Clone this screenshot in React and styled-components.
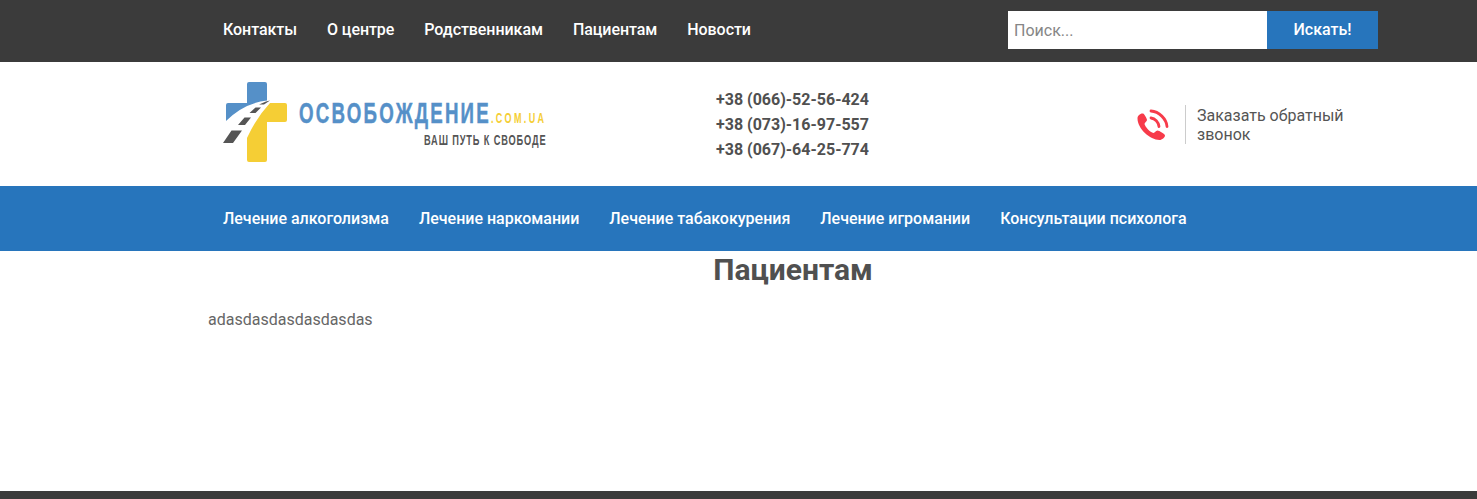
import React from "react";
import styled, { createGlobalStyle } from "styled-components";

const GlobalStyle = createGlobalStyle`
  html, body {
    margin: 0;
    padding: 0;
    background: #fff;
    font-family: Roboto, "Liberation Sans", sans-serif;
    color: #505050;
    overflow: hidden;
  }
  * { box-sizing: border-box; }
`;

const Page = styled.div`
  display: flex;
  flex-direction: column;
  height: 499px;
`;

const Band = styled.div`
  background: ${(p) => p.$bg};
  height: ${(p) => p.$h}px;
  padding-left: 208px;
  flex: none;
`;

const Container = styled.div`
  width: 1170px;
  height: 100%;
  padding-bottom: ${(p) => p.$pb || 0}px;
  display: flex;
  align-items: center;
  justify-content: space-between;
`;

const Nav = styled.nav`
  display: flex;
  gap: 30px;
  padding-left: 15px;
  letter-spacing: ${(p) => p.$ls || 0}px;
`;

const NavLink = styled.a`
  color: #fff;
  font-size: 16px;
  font-weight: 500;
  line-height: 20px;
  text-decoration: none;
  white-space: nowrap;
`;

const Search = styled.form`
  display: flex;
  height: 38px;
  margin: 0;
`;

const SearchInput = styled.input`
  width: 259px;
  border: 0;
  outline: 0;
  padding: 0 6px;
  font: 400 16px Roboto, sans-serif;
  color: #505050;
  background: #fff;
  &::placeholder {
    color: #868686;
    opacity: 1;
  }
`;

const SearchButton = styled.button`
  width: 111px;
  padding: 0 0 2px;
  border: 0;
  background: #2775bc;
  color: #fff;
  font: 500 16px Roboto, sans-serif;
`;

const Logo = styled.a`
  display: flex;
  flex: none;
  width: 330px;
  height: 85px;
  margin: -3px 0 0 12px;
  align-items: center;
`;

const LogoMark = styled.svg`
  width: 70px;
  height: 85px;
  flex: none;
`;

/* no condensed family is installed, so the wordmark is squeezed from its right edge */
const LogoWords = styled.div`
  display: flex;
  flex-direction: column;
  align-items: flex-end;
  width: 256px;
  margin-top: 1px;
  font-family: "Liberation Sans", sans-serif;
  font-weight: 700;
  white-space: nowrap;
`;

const LogoTitle = styled.div`
  display: flex;
  align-items: baseline;
  line-height: 26px;
  transform: scaleX(0.645);
  transform-origin: right center;
`;

const LogoName = styled.span`
  color: #5590c8;
  font-size: 29px;
  letter-spacing: 3.4px;
  -webkit-text-stroke: 0.5px #5590c8;
`;

const LogoDomain = styled.span`
  color: #f5ce35;
  font-size: 14px;
  letter-spacing: 3.6px;
`;

const LogoSlogan = styled.div`
  color: #555;
  font-size: 14px;
  letter-spacing: 1.3px;
  line-height: 14px;
  margin-top: 2px;
  transform: scaleX(0.66);
  transform-origin: right center;
`;

const Phones = styled.div`
  display: flex;
  flex-direction: column;
  margin-left: 166px;
`;

const Phone = styled.a`
  color: #505050;
  font-size: 16px;
  font-weight: 700;
  line-height: 25px;
  white-space: nowrap;
`;

const Callback = styled.div`
  display: flex;
  align-items: center;
  margin-left: auto;
  margin-right: 34px;
  width: 207px;
`;

const CallIcon = styled.svg`
  width: 32px;
  height: 32px;
  flex: none;
  color: #f73b4a;
`;

const CallText = styled.div`
  margin-left: 16px;
  padding: 1px 0 0 11px;
  border-left: 1px solid #ccc;
  font-size: 16px;
  line-height: 19px;
  color: #555;
`;

const Main = styled.main`
  flex: 1;
  padding-left: 208px;
`;

const Content = styled.div`
  width: 1170px;
`;

const Title = styled.h1`
  margin: 0;
  text-align: center;
  font-size: 30px;
  font-weight: 700;
  line-height: 38px;
  color: #505050;
`;

const Paragraph = styled.p`
  margin: 21px 0 0;
  font-size: 16px;
  line-height: 20px;
  color: #666;
`;

const topLinks = ["Контакты", "О центре", "Родственникам", "Пациентам", "Новости"];
const mainLinks = [
  "Лечение алкоголизма",
  "Лечение наркомании",
  "Лечение табакокурения",
  "Лечение игромании",
  "Консультации психолога",
];
const phones = ["+38 (066)-52-56-424", "+38 (073)-16-97-557", "+38 (067)-64-25-774"];

const App = () => {
  return (
    <Page>
      <GlobalStyle />
      <Band $bg="#3b3b3b" $h={62}>
        <Container $pb={2}>
          <Nav $ls={-0.06}>
            {topLinks.map((t) => (
              <NavLink key={t}>{t}</NavLink>
            ))}
          </Nav>
          <Search onSubmit={(e) => e.preventDefault()}>
            <SearchInput placeholder="Поиск..." />
            <SearchButton>Искать!</SearchButton>
          </Search>
        </Container>
      </Band>
      <Band $bg="#fff" $h={124}>
        <Container>
          <Logo>
            <LogoMark viewBox="0 0 70 85">
              <path
                fill="#5590c8"
                d="M29 2H45a2 2 0 0 1 2 2V20.500Q24 23 6 41V25a2 2 0 0 1 2-2H27V4a2 2 0 0 1 2-2Z"
              />
              <path
                fill="#f5ce35"
                d="M50 23H65a2 2 0 0 1 2 2V40a2 2 0 0 1-2 2H47V80a2 2 0 0 1-2 2H29a2 2 0 0 1-2-2V58Q36 38 50 23Z"
              />
              <path
                fill="#555"
                d="M3 63H13L22 50.500H11.500ZM18 45H25L31 37.500H24.500ZM29.500 33H35.500L41 27.500H35.500ZM39 24.500H44L50 20.500 46 21.500Z"
              />
            </LogoMark>
            <LogoWords>
              <LogoTitle>
                <LogoName>ОСВОБОЖДЕНИЕ</LogoName>
                <LogoDomain>.COM.UA</LogoDomain>
              </LogoTitle>
              <LogoSlogan>ВАШ ПУТЬ К СВОБОДЕ</LogoSlogan>
            </LogoWords>
          </Logo>
          <Phones>
            {phones.map((p) => (
              <Phone key={p}>{p}</Phone>
            ))}
          </Phones>
          <Callback>
            <CallIcon viewBox="0 0 32 32" fill="none" stroke="currentColor" strokeLinecap="round">
              <path
                fill="currentColor"
                stroke="none"
                d="M0.500 10.500C0.500 7.500 3.500 5 6 5.500C7.500 6 10 10.500 10 12C10 13.500 7.500 14.500 7.500 16C8.500 19.500 13 24 16.500 25C18 25 18.500 22.500 20.500 22.500C22 22.500 28 26 28 27.500C28 29.500 25 32 22.500 32C13 32 0.500 20.500 0.500 10.500Z"
              />
              <path strokeWidth="2.800" d="M14 10C18 10.500 21.500 14 22 18.500" />
              <path strokeWidth="2.800" d="M14 3C22 3.500 29.500 11 30 18.500" />
            </CallIcon>
            <CallText>Заказать обратный звонок</CallText>
          </Callback>
        </Container>
      </Band>
      <Band $bg="#2775bc" $h={65}>
        <Container>
          <Nav $ls={-0.01}>
            {mainLinks.map((t) => (
              <NavLink key={t}>{t}</NavLink>
            ))}
          </Nav>
        </Container>
      </Band>
      <Main>
        <Content>
          <Title>Пациентам</Title>
          <Paragraph>adasdasdasdasdasdas</Paragraph>
        </Content>
      </Main>
      <Band $bg="#3b3b3b" $h={8} />
    </Page>
  );
};

export default App;
